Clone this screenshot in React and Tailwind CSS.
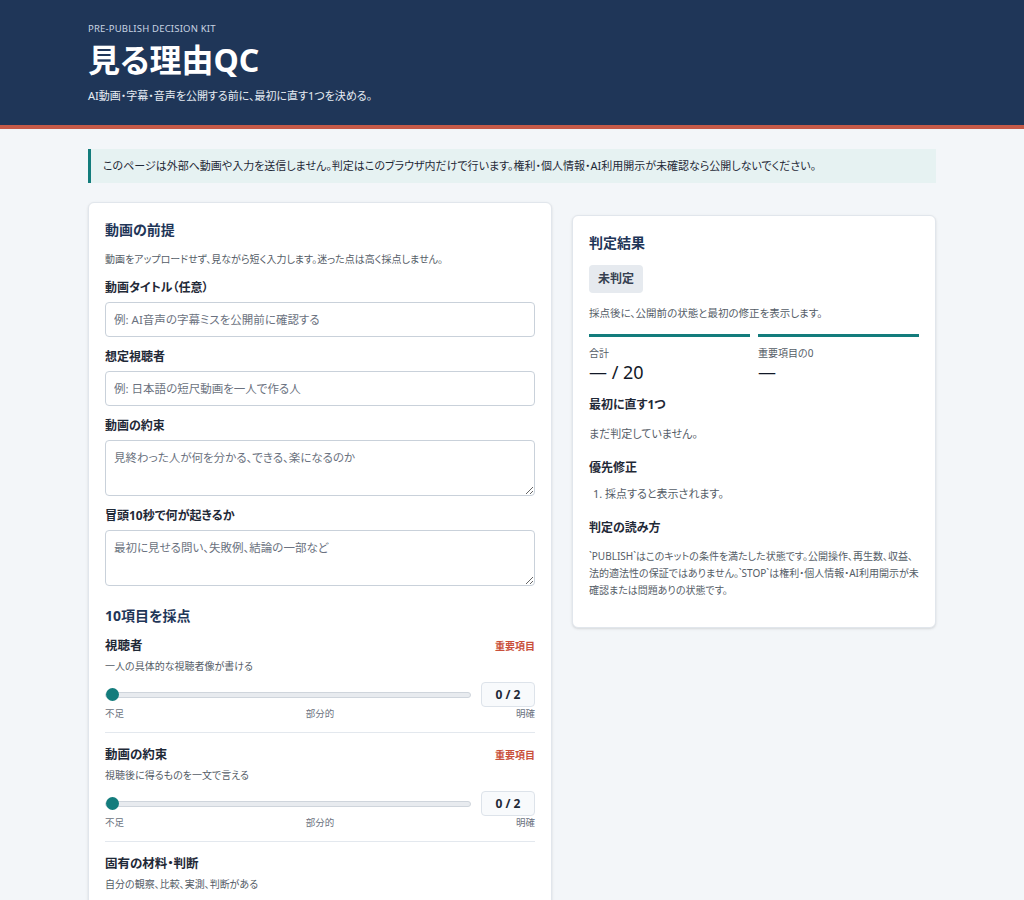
import React, { useState } from 'react';

const font = { fontFamily: '"Noto Sans", "Noto Sans CJK JP", sans-serif' };

const ITEMS = [
  { key: 'viewer', title: '視聴者', desc: '一人の具体的な視聴者像が書ける', critical: true },
  { key: 'promise', title: '動画の約束', desc: '視聴後に得るものを一文で言える', critical: true },
  { key: 'original', title: '固有の材料・判断', desc: '自分の観察、比較、実測、判断がある', critical: false },
];

const Field = ({ label, placeholder, area }) => (
  <div>
    <label className="block text-[12px] leading-[18px] font-bold text-[#1f2937] mb-[5px]">{label}</label>
    {area ? (
      <textarea
        rows="2"
        placeholder={placeholder}
        className="block w-full h-[56px] rounded border border-[#c9d1da] bg-white px-2 py-[8px] text-[11.5px] text-[#333] placeholder:text-[#6b7280]"
      />
    ) : (
      <input
        type="text"
        placeholder={placeholder}
        className="block w-full h-[35px] rounded border border-[#c9d1da] bg-white px-2 text-[11.5px] text-[#333] placeholder:text-[#6b7280]"
      />
    )}
  </div>
);

const ScoreItem = ({ item, value, onChange }) => (
  <div className="border-b border-[#e3e8ee] pb-[11px] mb-[13px]">
    <div className="flex items-center justify-between">
      <h3 className="text-[12.5px] font-bold text-[#1f2937]">{item.title}</h3>
      {item.critical && <span className="text-[10px] font-bold text-[#c9503b]">重要項目</span>}
    </div>
    <p className="mt-[3px] text-[10px] text-[#555d67]">{item.desc}</p>
    <div className="mt-[8px] flex items-center gap-[10px]">
      <input
        type="range"
        min="0"
        max="2"
        value={value}
        onChange={(e) => onChange(Number(e.target.value))}
        className="flex-1 h-[6px] appearance-none rounded-full border border-[#cfd5dc] bg-[#e8ebef] [&::-webkit-slider-thumb]:appearance-none [&::-webkit-slider-thumb]:h-[13px] [&::-webkit-slider-thumb]:w-[13px] [&::-webkit-slider-thumb]:rounded-full [&::-webkit-slider-thumb]:bg-[#137c7c]"
      />
      <output className="flex h-[25px] w-[54px] items-center justify-center rounded border border-[#dde3ea] bg-[#f8fafc] text-[12px] font-bold text-[#1f2937]">
        {value} / 2
      </output>
    </div>
    <div className="flex justify-between text-[9.5px] text-[#6b7280]">
      <span>不足</span>
      <span>部分的</span>
      <span>明確</span>
    </div>
  </div>
);

export default function App() {
  const [scores, setScores] = useState({ viewer: 0, promise: 0, original: 0 });

  return (
    <div className="min-h-screen bg-[#f3f6f9] [font-feature-settings:'palt']" style={font}>
      {/* header */}
      <header className="bg-[#1f3658] border-b-4 border-[#c65a48]">
        <div className="mx-auto w-[848px] pt-[22px] pb-[20px]">
          <p className="text-[9.5px] tracking-[0.02em] text-[#c8d3e2]">PRE-PUBLISH DECISION KIT</p>
          <h1 className="mt-[2px] text-[32px] leading-[44px] font-bold text-white">見る理由QC</h1>
          <p className="mt-[6px] text-[11px] text-[#e6ecf3]">AI動画・字幕・音声を公開する前に、最初に直す1つを決める。</p>
        </div>
      </header>

      <main className="mx-auto w-[848px] pt-[20px]">
        <div className="border-l-[3px] border-[#137c7c] bg-[#e6f2f2] px-[12px] py-[9px] text-[11px] text-[#1f2937]">
          このページは外部へ動画や入力を送信しません。判定はこのブラウザ内だけで行います。権利・個人情報・AI利用開示が未確認なら公開しないでください。
        </div>

        <div className="mt-[19px] flex items-start gap-[20px]">
          {/* input card */}
          <section className="w-[464px] rounded-md border border-[#e1e6ec] bg-white px-[16px] pt-[16px] shadow-sm">
            <h2 className="text-[14px] font-bold text-[#1f3658]">動画の前提</h2>
            <p className="mt-[12px] text-[10px] text-[#555d67]">動画をアップロードせず、見ながら短く入力します。迷った点は高く採点しません。</p>
            <div className="mt-[12px] flex flex-col gap-[11px]">
              <Field label="動画タイトル（任意）" placeholder="例: AI音声の字幕ミスを公開前に確認する" />
              <Field label="想定視聴者" placeholder="例: 日本語の短尺動画を一人で作る人" />
              <Field label="動画の約束" placeholder="見終わった人が何を分かる、できる、楽になるのか" area />
              <Field label="冒頭10秒で何が起きるか" placeholder="最初に見せる問い、失敗例、結論の一部など" area />
            </div>

            <h2 className="mt-[19px] mb-[11px] text-[14px] font-bold text-[#1f3658]">10項目を採点</h2>
            {ITEMS.map((item) => (
              <ScoreItem
                key={item.key}
                item={item}
                value={scores[item.key]}
                onChange={(v) => setScores((prev) => ({ ...prev, [item.key]: v }))}
              />
            ))}
          </section>

          {/* result card */}
          <aside className="mt-[13px] w-[364px] rounded-md border border-[#e1e6ec] bg-white px-[16px] pt-[16px] pb-[28px] shadow-sm">
            <h2 className="text-[14px] font-bold text-[#1f3658]">判定結果</h2>
            <div className="mt-[12px] inline-flex h-[28px] items-center rounded bg-[#e6eaef] px-[9px] text-[12px] font-bold text-[#374151]">未判定</div>
            <p className="mt-[13px] text-[10.5px] text-[#555d67]">採点後に、公開前の状態と最初の修正を表示します。</p>

            <div className="mt-[12px] grid grid-cols-2 gap-[8px]">
              <div className="border-t-[3px] border-[#137c7c] pt-[9px]">
                <p className="text-[10px] text-[#555d67]">合計</p>
                <p className="text-[18px] leading-[22px] text-[#111827]">— / 20</p>
              </div>
              <div className="border-t-[3px] border-[#137c7c] pt-[9px]">
                <p className="text-[10px] text-[#555d67]">重要項目の0</p>
                <p className="text-[18px] leading-[22px] text-[#111827]">—</p>
              </div>
            </div>

            <h3 className="mt-[13px] text-[12px] font-bold text-[#1f2937]">最初に直す1つ</h3>
            <p className="mt-[12px] text-[11px] text-[#555d67]">まだ判定していません。</p>

            <h3 className="mt-[16px] text-[12px] font-bold text-[#1f2937]">優先修正</h3>
            <ol className="mt-[9px] list-decimal pl-[16px] text-[11px] text-[#555d67]">
              <li>採点すると表示されます。</li>
            </ol>

            <h3 className="mt-[17px] text-[12px] font-bold text-[#1f2937]">判定の読み方</h3>
            <p className="mt-[11px] text-[10px] leading-[17px] text-[#555d67]">
              `PUBLISH`はこのキットの条件を満たした状態です。公開操作、再生数、収益、法的適法性の保証ではありません。`STOP`は権利・個人情報・AI利用開示が未確認または問題ありの状態です。
            </p>
          </aside>
        </div>
      </main>
    </div>
  );
}
